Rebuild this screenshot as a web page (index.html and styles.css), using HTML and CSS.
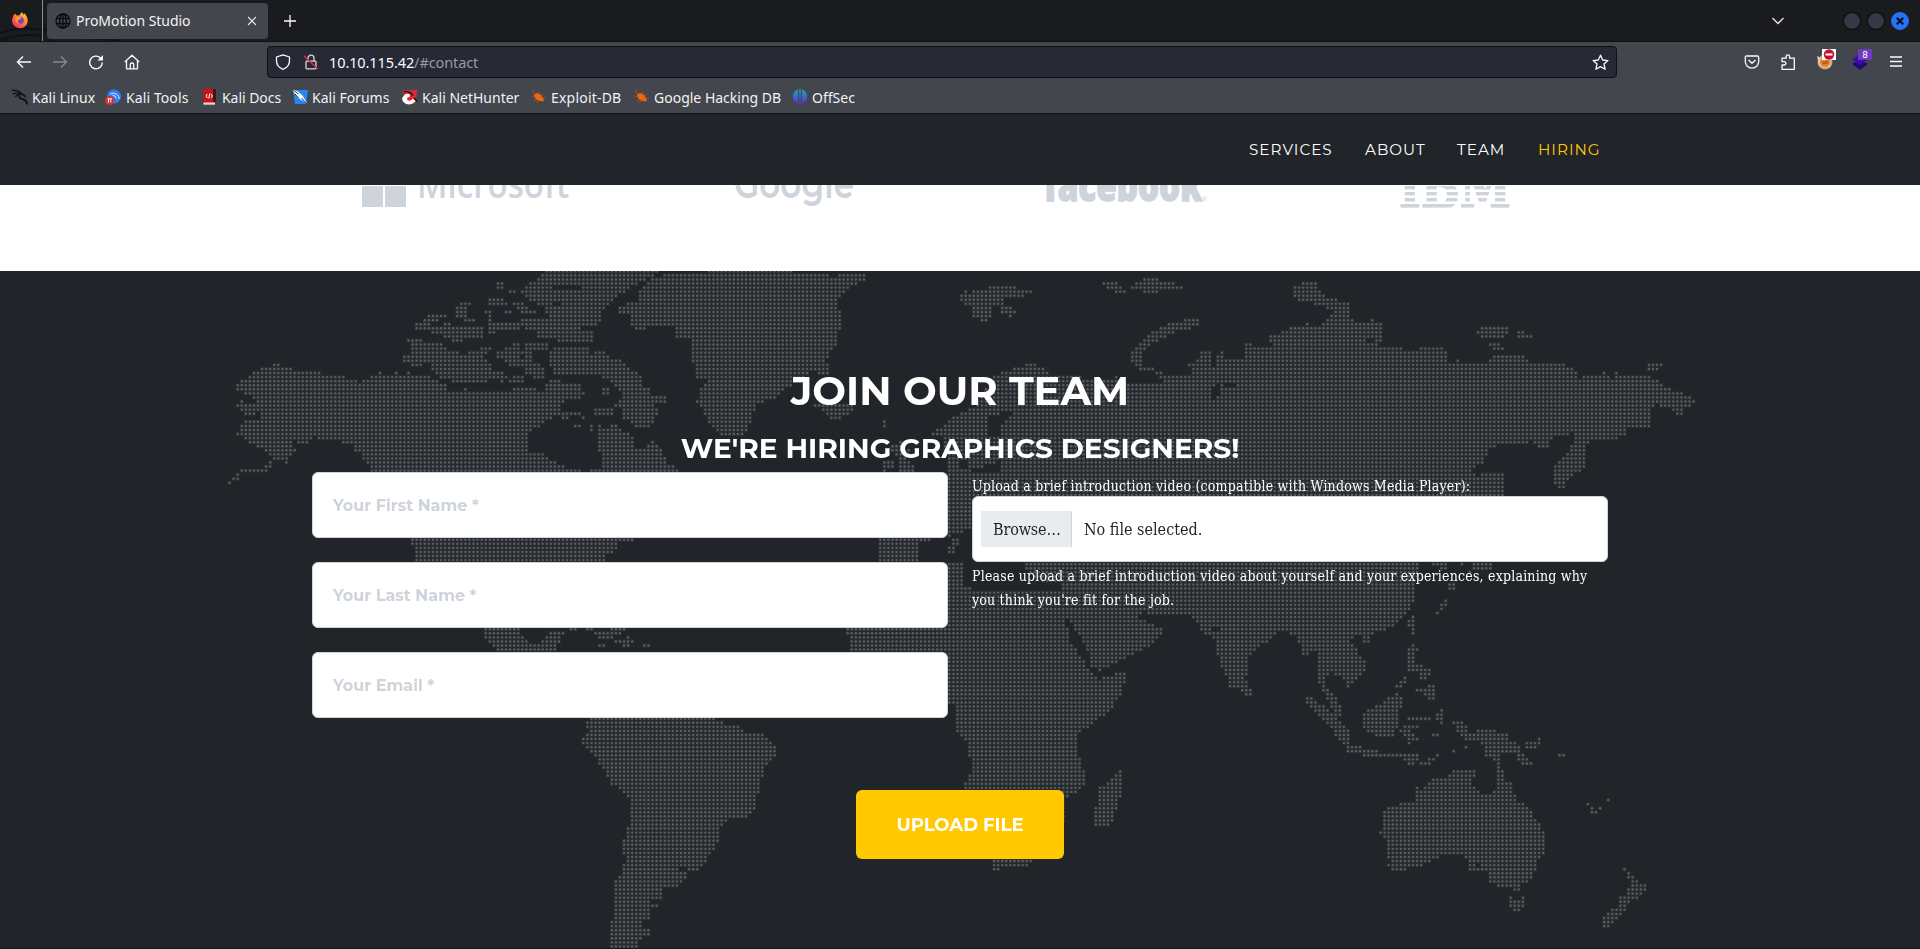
FILE: index.html
```html
<!DOCTYPE html>
<html lang="en">
<head>
<meta charset="utf-8">
<title>ProMotion Studio</title>
<link rel="stylesheet" href="styles.css">
</head>
<body>
<div class="browser">
  <div class="tabbar">
    <svg class="tabbar-art" width="160" height="41" fill="none" stroke="#101114"><path d="M0 33Q22 26 42 30M0 40Q22 33 42 36M42 28Q48 30 54 41M64 38Q90 37 120 41" stroke-width="2"/></svg>
    <div class="pinned">
      <svg width="18" height="18" viewBox="0 0 18 18">
        <defs><linearGradient id="fx" x1="1" y1="0" x2="0.2" y2="1"><stop offset="0" stop-color="#ffe14a"/><stop offset=".45" stop-color="#ff8a1e"/><stop offset="1" stop-color="#f0286c"/></linearGradient></defs>
        <path d="M2.6 4.2 4 2.6l1.3 1.6L8 4.4 11 1l1.4 2.6L14 2.6l2.2 4.2c2 6-2.2 10.400-7.200 10.400S.2 13 1.200 8Z" fill="url(#fx)"/>
        <circle cx="9.300" cy="9.300" r="3.500" fill="#8038d8"/><path d="M4.600 6.500c2-1.500 4 .3 6-.3-.4 2-2.200 2-3.500 3-1 1 0 3 2 2.700-3 1.500-5.500-1.500-4.500-5.400Z" fill="#ff9a28"/>
      </svg>
    </div>
    <div class="tab">
      <svg width="16" height="16" viewBox="0 0 16 16" fill="none" stroke="#0c0c0d" stroke-width="1.300"><circle cx="8" cy="8" r="7"/><ellipse cx="8" cy="8" rx="3.300" ry="7"/><path d="M8 1v14M1.500 5.500h13M1.500 10.500h13"/></svg>
      <span class="tab-title">ProMotion Studio</span>
      <svg class="tab-close" width="10" height="10" viewBox="0 0 10 10" stroke="#e8e8ea" stroke-width="1.100"><path d="M1 1l8 8M9 1L1 9"/></svg>
    </div>
    <svg class="newtab" width="12" height="12" viewBox="0 0 12 12" stroke="#fbfbfe" stroke-width="1.300"><path d="M6 0v12M0 6h12"/></svg>
    <div class="window-controls">
      <svg class="chevron" width="12" height="8" viewBox="0 0 12 8" fill="none" stroke="#e8e8ea" stroke-width="1.300"><path d="M.5 1 6 6.500 11.500 1"/></svg>
      <i class="dot"></i><i class="dot"></i>
      <i class="dot dot-close"><svg width="8" height="8" viewBox="0 0 8 8" stroke="#0b1020" stroke-width="2.200"><path d="M.8.8l6.400 6.400M7.200.8L.8 7.200"/></svg></i>
    </div>
  </div>
  <div class="toolbar">
    <div class="nav-buttons">
      <svg width="16" height="16" viewBox="0 0 16 16" fill="none" stroke="#fbfbfe" stroke-width="1.400"><path d="M15 8H1.500M7 2.500 1.500 8 7 13.500"/></svg>
      <svg width="16" height="16" viewBox="0 0 16 16" fill="none" stroke="#86888c" stroke-width="1.400"><path d="M1 8h13.500M9 2.500 14.500 8 9 13.500"/></svg>
      <svg width="16" height="16" viewBox="0 0 16 16" fill="none" stroke="#fbfbfe" stroke-width="1.400"><path d="M12.500 4A6.300 6.300 0 1 0 14.300 8.500"/><path d="M9.500 6.500H15V1Z" fill="#fbfbfe" stroke="none"/></svg>
      <svg width="16" height="16" viewBox="0 0 16 16" fill="none" stroke="#fbfbfe" stroke-width="1.300" stroke-linejoin="round"><path d="M.8 8 8 1.200 15.200 8M2.500 6.800v8h11v-8M6.300 14.500V10.500q0-1.500 1.700-1.500t1.700 1.500v4"/></svg>
    </div>
    <div class="urlbar">
      <svg width="16" height="16" viewBox="0 0 16 16" fill="none" stroke="#fbfbfe" stroke-width="1.300" stroke-linejoin="round"><path d="M8 .8 14.500 3v3.500C14.500 11 11.500 14 8 15.300 4.500 14 1.500 11 1.500 6.500V3Z"/></svg>
      <svg width="16" height="16" viewBox="0 0 16 16" fill="none"><rect x="3" y="7.200" width="10" height="7.600" rx="1" stroke="#d8d8dc" stroke-width="1.300"/><path d="M5 7V4.200a3 3 0 0 1 6 0V7" stroke="#d8d8dc" stroke-width="1.300"/><path d="M1 2l14 13" stroke="#e22850" stroke-width="1.400"/></svg>
      <span class="url"><b>10.10.115.42</b>/#contact</span>
      <svg class="star" width="17" height="17" viewBox="0 0 17 17" fill="none" stroke="#fbfbfe" stroke-width="1.300" stroke-linejoin="round"><path d="M8.500 1.200 10.700 6l5.200.6-3.900 3.500 1.100 5.200-4.600-2.700-4.600 2.700L5 10.100 1.100 6.600 6.300 6Z"/></svg>
    </div>
    <div class="actions">
      <svg width="16" height="16" viewBox="0 0 16 16" fill="none" stroke="#fbfbfe" stroke-width="1.300" stroke-linejoin="round"><path d="M2.500 2h11q1.200 0 1.200 1.200V7.500a6.700 6.700 0 0 1-13.400 0V3.200Q1.300 2 2.500 2ZM4.500 6 8 9.200 11.500 6"/></svg>
      <svg width="16" height="16" viewBox="0 0 16 16" fill="none" stroke="#fbfbfe" stroke-width="1.300" stroke-linejoin="round"><path d="M2 15.300V11h2.200a1.700 1.700 0 0 0 0-3.400H2V4.200h4.200V2.500a1.700 1.700 0 0 1 3.400 0v1.700h4.700v11.100Z"/></svg>
      <svg class="ext" width="20" height="21" viewBox="0 0 20 21"><circle cx="9" cy="13" r="7.500" fill="#b9a58e"/><path d="M1 7l4 2 4-2 6 3-1 8-6 1-5-3Z" fill="#d9cdbd"/><circle cx="9" cy="13" r="5.200" fill="#f58a1f"/><path d="M5 12l3 1 2-2 3 2-2 3-2-1-2 1Z" fill="#c45f1a"/><rect x="6" y="0" width="14" height="11" fill="#fff"/><circle cx="13" cy="5.500" r="5.200" fill="#c3122f"/><rect x="9.500" y="4.500" width="7" height="2" fill="#fff"/></svg>
      <svg class="ext" width="20" height="21" viewBox="0 0 20 21"><path d="M0 15l8-4 8 4-8 6Z" fill="#200a70"/><path d="M0 10.500 8 5l8 5.500-8 5.500Z" fill="#4608ad"/><rect x="6" y="0" width="14" height="11" rx="1" fill="#6e3cc0"/><text x="13" y="9" text-anchor="middle" class="badge">8</text></svg>
      <svg width="14" height="16" viewBox="0 0 14 16" stroke="#fbfbfe" stroke-width="1.300"><path d="M1 3h12M1 7.500h12M1 12h12"/></svg>
    </div>
  </div>
  <div class="bookmarks">
    <div><svg width="16" height="16" viewBox="0 0 16 16" fill="none" stroke="#111214"><path d="M0 1.500q6-1 10 3.500M1 5q4-2 8-.5M3.500 8q2-3.500 6-3 3 1 4.500 3" stroke-width="1.400"/><path d="M7.500 6q-1 3.500 3.500 4.200 3.800.8 4 5.300" stroke-width="1.900"/></svg><span>Kali Linux</span></div>
    <div><svg width="16" height="16" viewBox="0 0 16 16"><circle cx="9" cy="7.500" r="7" fill="#2f7df2"/><path d="M5 5q4-2 7 .5t2 4.500M7.500 6.500q3-.5 4 3" fill="none" stroke="#dbe8ff"/><circle cx="4.600" cy="11.500" r="4.500" fill="#e02d31"/><path d="M2.500 9.800h4.400M3.500 10v3.500M5.800 10v3.500" stroke="#fff" fill="none"/></svg><span class="narrow">Kali Tools</span></div>
    <div><svg width="16" height="16" viewBox="0 0 16 16"><path d="M1.500 0H11v15H1.500Z" fill="#cf1015"/><path d="M11 0h3v13h-3Z" fill="#3a1720"/><path d="M1.500 13.500H13v2.200H1.500Z" fill="#e9d6d6"/><path d="M5.500 5 4 7l1.500 2M9 5l1.500 2L9 9M7.800 4.500 6.700 9.500" stroke="#fff" fill="none"/></svg><span class="narrow">Kali Docs</span></div>
    <div><svg width="16" height="16" viewBox="0 0 16 16"><path d="M1 1h15L14 15H3Z" fill="#2388f5"/><path d="M0 0 6 2.500 10 6l2 3 3.500 6-5-3.500-4-2L3 5Z" fill="#fff"/><path d="M0 0l6.500 5M3 5l4 4.500M9.500 9l5.500 6" stroke="#16202c" fill="none" stroke-width=".9"/></svg><span>Kali Forums</span></div>
    <div><svg width="16" height="16" viewBox="0 0 16 16"><path d="M1 1h14.500L13 15H3Z" fill="#e0262f"/><path d="M0 9.500q3-6.500 8-4l-.5 2.500q-3.500.5-2 3 2.500 2 5.500-1.500l3 2.500q-5 4.500-9.500 3-4-1.500-4.500-5.500Z" fill="#fff"/><path d="M2 2.500q6-.5 9 4M12 9l3 3.500" stroke="#17171a" fill="none" stroke-width="1.600"/></svg><span>Kali NetHunter</span></div>
    <div><svg width="16" height="16" viewBox="0 0 16 16"><path d="M3 5q4-2 7 1t3 6q-4 1-7-1T3 5Z" fill="#f2650f"/><path d="M1 3l4 3M0 7l5 1M2 12l5-2M5 14l4-3M8 2l1 4M12 5l-2 3M11 9l4 0M1 2l3 0" stroke="#c4561a" fill="none" stroke-width=".6"/></svg><span class="wide">Exploit-DB</span></div>
    <div><svg width="16" height="16" viewBox="0 0 16 16"><path d="M3 5q4-2 7 1t3 6q-4 1-7-1T3 5Z" fill="#f2650f"/><path d="M1 3l4 3M0 7l5 1M2 12l5-2M5 14l4-3M8 2l1 4M12 5l-2 3M11 9l4 0M1 2l3 0" stroke="#c4561a" fill="none" stroke-width=".6"/></svg><span>Google Hacking DB</span></div>
    <div><svg width="16" height="16" viewBox="0 0 16 16"><defs><linearGradient id="os" x1="0" y1="0" x2="0" y2="1"><stop offset="0" stop-color="#18a5b8"/><stop offset="1" stop-color="#5b2bd0"/></linearGradient></defs><path d="M6 .6v13.800A7.200 7.200 0 0 1 6 .6ZM10 .6v13.800A7.200 7.200 0 0 0 10 .6ZM7.200 0h1.600v16H7.200Z" fill="url(#os)"/></svg><span>OffSec</span></div>
  </div>
</div>

<nav class="site-nav">
  <a class="n1">SERVICES</a><a class="n2">ABOUT</a><a class="n3">TEAM</a><a class="n4 active">HIRING</a>
</nav>

<section class="clients">
  <svg width="324" height="26" fill="#ced4da"><path d="M50 1h21v21H50ZM73 1h21v21H73Z"/><text class="logo-ms" x="105" y="13" textLength="152" lengthAdjust="spacingAndGlyphs">Microsoft</text></svg>
  <svg width="324" height="26" fill="#ced4da"><text class="logo-go" x="98" y="12.500" textLength="120" lengthAdjust="spacingAndGlyphs">Google</text></svg>
  <svg width="324" height="26" fill="#ced4da"><text class="logo-fb" x="84" y="16" textLength="158" lengthAdjust="spacingAndGlyphs">facebook</text><text class="logo-r" x="242" y="16">®</text></svg>
  <svg width="324" height="26"><defs><pattern id="bars" width="120" height="6" patternUnits="userSpaceOnUse" y="1"><rect width="120" height="3.400" fill="#ced4da"/></pattern></defs><text class="logo-ibm" x="115" y="22.500" fill="url(#bars)" stroke="url(#bars)" stroke-width="2" textLength="112" lengthAdjust="spacingAndGlyphs">IBM</text></svg>
</section>

<section class="contact" id="contact">
  <canvas class="map" id="map" width="1920" height="677"></canvas>
  <div class="inner">
    <h2><span>JOIN OUR TEAM</span></h2>
    <h3><span>WE'RE HIRING GRAPHICS DESIGNERS!</span></h3>
    <form class="form">
      <div class="col fields">
        <div class="field"><span class="p1">Your First Name *</span></div>
        <div class="field"><span class="p2">Your Last Name *</span></div>
        <div class="field"><span class="p3">Your Email *</span></div>
      </div>
      <div class="col upload">
        <div class="label"><span class="l1">Upload a brief introduction video (compatible with Windows Media Player):</span></div>
        <div class="file"><div class="browse"><span>Browse…</span></div><span class="nofile">No file selected.</span></div>
        <div class="label"><span class="l2">Please upload a brief introduction video about yourself and your experiences, explaining why</span></div>
        <div class="label"><span class="l3">you think you're fit for the job.</span></div>
      </div>
    </form>
    <div class="submit"><span>UPLOAD FILE</span></div>
  </div>
</section>
<script src="map.js"></script>
</body>
</html>
```
FILE: styles.css
```css
* { box-sizing: border-box; }
body { margin: 0; width: 1920px; height: 949px; overflow: hidden; background: #fff; font-family: "Noto Sans", sans-serif; display: flex; flex-direction: column; }
svg { display: block; flex: none; }

.browser { height: 114px; flex: none; background: #43464c; border-bottom: 1px solid #0d0e11; color: #f2f2f4; font-family: "Noto Sans", sans-serif; font-size: 14px; }
.tabbar { position: relative; display: flex; align-items: center; height: 42px; background: #1a1b1f; border-bottom: 1px solid #0f1013; }
.tabbar-art { position: absolute; left: 0; top: 0; }
.pinned { position: relative; width: 43px; height: 41px; padding: 11px 0 0 11px; border-right: 1px solid #8d8e91; }
.tab { position: relative; display: flex; align-items: center; width: 221px; height: 36px; margin-left: 4px; padding: 0 11px 0 8px; border-radius: 4px; background: #43464c; }
.tab-title { margin-left: 5px; letter-spacing: -.04px; }
.tab-close { margin-left: auto; }
.newtab { margin-left: 16px; }
.window-controls { display: flex; align-items: center; margin-left: auto; padding-right: 11px; gap: 6px; }
.chevron { margin-right: 53px; }
.dot { width: 18px; height: 18px; border-radius: 50%; background: #343946; border: 1px solid #07080a; display: flex; align-items: center; justify-content: center; }
.dot-close { background: #2472f5; border-color: #2472f5; }

.toolbar { display: flex; align-items: center; height: 40px; }
.nav-buttons { display: flex; gap: 20px; width: 267px; padding-left: 16px; }
.urlbar { display: flex; align-items: center; width: 1350px; height: 32px; padding: 0 7px; border: 1px solid #0e0f13; border-radius: 4px; background: #272935; gap: 12px; }
.url { color: #9a9ba2; margin-left: -2px; font-size: 14.500px; letter-spacing: -.1px; }
.url b { font-weight: 400; color: #fbfbfe; }
.star { margin-left: auto; }
.actions { display: flex; align-items: center; padding-left: 127px; gap: 20px; }
.ext { margin: -5px 0 0 0; }
.actions svg:nth-child(4) { margin-left: -4px; }
.actions svg:nth-child(5) { margin-left: -3px; }
.badge { font: 9px "DejaVu Sans", sans-serif; fill: #fff; }
.bookmarks { display: grid; grid-template-columns: 93px 97px 90px 110px 129px 103px 158px 100px; padding: 6px 0 0 12px; }
.bookmarks div { display: flex; align-items: center; gap: 4px; height: 18px; white-space: nowrap; }
.narrow { letter-spacing: -.05px; }
.wide { letter-spacing: .2px; }
.bookmarks div:nth-child(2) { gap: 5px; }
.bookmarks div:nth-child(2) .narrow { letter-spacing: .1px; }

.site-nav { position: relative; display: flex; align-items: center; height: 71px; flex: none; padding: 0 0 0 1249px; background: #212529; color: #fff; font: 400 15.200px/24px Montserrat, "Inter", sans-serif; }
.site-nav a { letter-spacing: 1px; white-space: nowrap; }
.n1 { width: 116px; } .n2 { width: 92px; } .n3 { width: 81px; }
.site-nav .active { color: #ffc800; }

.clients { display: grid; grid-template-columns: repeat(4, 324px); height: 86px; flex: none; padding: 0 312px; background: #fff; }
.logo-ms { font: 600 37px "Open Sans", sans-serif; }
.logo-go { font: 600 40px Montserrat, "Lato", sans-serif; }
.logo-fb { font: 800 42px "Open Sans", sans-serif; stroke: #ced4da; stroke-width: 1.500px; }
.logo-r { font: 6px "Open Sans", sans-serif; }
.logo-ibm { font: 700 62px "DejaVu Serif", serif; }

.contact { position: relative; height: 678px; flex: none; background: #212529; border-bottom: 1px solid #15181a; }
.map { position: absolute; left: 0; top: 0; }
.inner { position: relative; width: 1296px; margin: 0 auto; padding-top: 96px; color: #fff; }
h2, h3 { margin: 0; font-family: Montserrat, "Inter", sans-serif; font-weight: 700; text-align: center; white-space: nowrap; }
h2 { font-size: 40px; line-height: 48px; }
h3 { font-size: 28px; line-height: 34px; margin-top: 16px; padding-bottom: 7px; }
h2 span, h3 span, .submit span { display: inline-block; }
.form { display: grid; grid-template-columns: 636px 636px; gap: 24px; }
.fields { display: flex; flex-direction: column; gap: 24px; }
.field, .file { display: flex; align-items: center; height: 66px; border: 1px solid #ced4da; border-radius: 6px; background: #fff; }
.field { padding: 1px 0 0 20px; color: #ced4da; font: 700 16px/24px Montserrat, "Inter", sans-serif; }
.label { height: 24px; padding-top: 2px; font: 14px/24px "Roboto Slab", "DejaVu Serif Condensed", "DejaVu Serif", serif; font-stretch: condensed; letter-spacing: .2px; white-space: nowrap; }
.file { padding-left: 8px; color: #212529; font: 16px/24px "Roboto Slab", "DejaVu Serif Condensed", "DejaVu Serif", serif; font-stretch: condensed; white-space: nowrap; }
.file span { padding-top: 1px; }
.browse { display: flex; align-items: center; width: 91px; height: 36px; padding-left: 12px; background: #e9ecef; border-right: 1px solid #ced4da; letter-spacing: -.15px; }
.nofile { margin-left: 12px; }
.submit { display: flex; align-items: center; justify-content: center; width: 208px; height: 69px; margin: 72px auto 0; border-radius: 6px; background: #ffc800; font: 700 18px/24px Montserrat, "Inter", sans-serif; white-space: nowrap; }
```
FILE: map.js
```js
// Dotted world map. Each sheet holds outlines in its own units:
// page x = ox + x / sx, section y = oy + y / 3.
const sheets = [
  { ox: 220, oy: -1, sx: 2.45, land: [
    // North America
    "40,345 50,330 70,320 80,305 100,295 130,292 132,281 148,281 152,292 178,296 180,304 245,304 250,314 305,320 330,332 345,338 350,330 375,318 390,306 400,318 430,306 450,315 462,306 480,315 505,318 535,332 560,345 560,362 590,362 595,353 610,353 612,362 640,366 700,366 715,355 775,355 780,366 800,360 795,342 820,325 850,340 885,345 893,370 880,390 850,390 835,405 835,430 800,455 770,480 757,495 755,540 785,545 800,565 825,575 850,593 885,598 885,605 905,605 905,598 940,590 935,560 928,540 930,465 945,470 970,465 1000,490 1015,505 1020,530 1045,530 1060,512 1075,530 1085,550 1095,575 1110,590 1125,605 1060,760 1015,803 1010,812 975,815 970,840 950,855 945,880 480,880 468,800 400,625 370,605 365,590 350,575 345,555 330,540 320,525 290,515 240,505 235,498 215,522 190,520 185,512 170,525 190,537 185,552 168,560 165,582 155,565 135,570 118,602 50,612 45,628 20,642 15,635 40,612 55,600 110,590 130,565 110,545 90,530 70,515 50,500 40,490 50,465 60,452 100,445 95,430 60,435 50,420 30,410 45,395 55,390 70,400 90,400 85,385 60,375 40,360",
    "450,275 450,255 470,245 470,225 458,213 460,206 495,206 497,218 540,220 560,240 590,248 605,260 612,242 640,242 640,232 665,232 665,245 650,255 640,262 655,272 665,285 665,295 695,308 710,320 695,338 665,328 640,338 545,332 530,310 520,295 520,280 470,290",
    "678,262 678,250 700,232 730,218 740,225 735,240 745,245 740,260 745,287 710,287 700,272",
    "748,220 805,220 800,248 768,248 768,275 785,287 800,312 798,332 770,325 745,305 748,245",
    "705,322 740,318 745,335 705,338",
    "808,240 815,230 900,232 910,250 930,242 955,255 960,268 985,268 1000,290 1035,315 1035,345 1055,355 1060,372 1095,378 1092,398 1060,400 1075,420 1065,460 1045,472 1015,468 985,440 990,425 965,405 985,380 975,350 945,330 930,312 815,312 808,270",
    "935,353 955,353 955,375 935,375", "915,413 962,413 965,432 920,437", "836,430 870,422 900,447 870,437 840,447", "866,462 884,462 884,472 866,472", "906,462 914,462 914,482 906,482",
    "478,165 500,145 510,132 557,132 550,145 532,150 560,160 580,174 600,165 645,175 645,202 560,204 520,190 515,175 478,180",
    "568,206 595,206 595,216 568,216", "577,125 588,95 617,95 617,108 602,123 602,140 577,140", "600,150 612,145 627,148 627,162 603,162",
    "648,125 665,118 657,85 685,85 707,95 707,112 668,112 665,155 735,155 737,175 680,182 665,205 655,180 656,140 648,135", "692,120 716,120 716,132 692,132",
    "676,35 697,35 697,57 676,57", "706,58 727,58 727,70 706,70", "716,98 742,90 745,110 777,122 775,138 740,133 722,117",
    "738,65 760,40 800,3 1078,3 1045,32 1020,42 990,67 960,90 950,107 930,125 935,150 925,165 870,167 865,175 878,172 915,182 912,215 828,215 820,203 776,203 778,180 740,173 735,147 780,147 803,143 797,110 765,95 745,80",
    // Greenland
    "978,127 978,110 1000,95 1025,92 1030,60 1050,32 1065,22 1085,22 1085,6 1196,6 1196,-2 1403,-2 1403,6 1492,6 1494,22 1513,22 1513,6 1584,6 1584,32 1560,42 1531,67 1512,90 1522,150 1514,210 1500,242 1480,275 1492,285 1490,312 1470,312 1450,305 1420,340 1390,350 1365,380 1320,400 1305,440 1285,495 1260,500 1225,497 1195,450 1185,420 1165,395 1180,355 1197,325 1165,322 1170,290 1150,275 1150,210 1115,205 1110,172 1045,172 1040,180 1025,180 1005,165 1000,135",
    "1450,400 1560,400 1548,430 1508,448 1480,430"
  ], water: ["816,45 888,45 888,58 816,58", "830,110 800,92 840,92", "560,345 620,340 700,342 700,352 625,350 580,358", "668,112 705,132 700,146 668,146", "520,158 545,155 545,166 520,166"] },
  { ox: 220, oy: 329, sx: 2.119, land: [
    "785,345 1040,345 1060,366 1095,373 1110,392 1145,400 1172,425 1182,445 1178,470 1155,500 1145,550 1142,580 1128,642 1100,657 1075,662 1060,690 1057,725 1035,775 1010,810 990,815 990,835 970,862 940,866 937,898 912,905 930,915 912,932 912,958 895,962 892,985 914,988 912,1008 893,1012 885,1050 826,1050 826,962 845,930 835,930 835,845 855,820 853,790 863,770 853,765 853,735 862,690 870,650 870,600 850,567 825,550 820,520 800,495 800,475 785,455 766,432 766,412 782,400 776,385 776,365",
    "558,84 637,84 637,105 655,128 680,130 690,105 698,95 730,95 720,130 712,157 595,157 575,138 560,115",
    "740,82 757,82 757,92 740,92", "777,82 790,82 790,92 777,92", "826,82 860,82 850,103 828,100", "792,95 825,95 835,115 803,117", "835,120 862,120 862,107 870,112 878,130 838,130", "802,131 818,131 818,141 802,141", "854,131 869,131 869,141 854,141", "897,131 912,131 912,141 897,141"
  ], water: ["975,800 992,800 992,812 975,812"] },
  { ox: 940, oy: -1, sx: 2.01, land: [
    // Eurasia
    "-20,490 3,470 20,450 40,430 70,405 95,350 105,318 130,305 155,292 180,280 188,280 210,298 230,315 280,320 345,330 355,318 360,345 375,345 400,340 440,345 450,335 440,315 430,302 400,300 383,275 383,245 400,222 410,205 430,182 465,158 500,146 523,146 523,168 470,188 440,207 420,232 407,250 407,285 433,298 450,315 500,322 510,305 500,285 520,265 523,244 548,244 555,265 565,244 575,262 612,265 612,220 628,220 630,230 670,230 660,205 665,193 690,185 712,170 735,168 740,158 748,166 770,165 777,146 785,135 775,115 755,103 720,94 710,77 714,48 738,30 742,28 760,45 765,65 785,85 824,96 820,115 822,140 832,155 865,158 870,145 885,158 890,215 882,228 930,232 935,242 965,235 1005,232 1022,245 1022,272 1035,280 1040,266 1048,282 1103,278 1110,256 1175,256 1188,275 1225,282 1250,280 1275,300 1285,325 1290,318 1325,318 1340,302 1350,328 1358,305 1372,318 1420,316 1440,330 1463,355 1500,375 1520,392 1510,408 1495,410 1495,432 1485,434 1465,415 1440,405 1430,420 1430,472 1385,472 1380,490 1355,512 1310,508 1300,520 1300,580 1288,605 1265,625 1247,665 1233,640 1235,590 1260,545 1280,510 1270,490 1232,500 1222,532 1205,532 1195,515 1130,522 1100,545 1095,578 1068,600 1075,615 1135,610 1137,690 1060,700 1000,780 962,880 958,940 955,990 940,1030 920,1062 890,1087 830,1100 828,1115 842,1150 857,1170 855,1200 835,1238 820,1256 815,1235 800,1220 780,1200 777,1250 795,1280 807,1310 806,1338 795,1335 778,1290 763,1250 758,1150 745,1150 742,1160 728,1158 728,1130 712,1095 700,1088 672,1090 665,1112 640,1132 620,1160 620,1195 612,1232 600,1255 582,1258 573,1210 563,1180 555,1140 548,1100 530,1095 520,1060 495,1033 425,1035 410,1020 400,1045 415,1052 445,1072 445,1090 425,1130 400,1145 350,1182 320,1202 305,1195 300,1150 285,1110 265,1060 242,1020 240,940 195,930 175,900 170,870 60,790 60,780 16,800 0,620 16,610 16,560 3,540 3,500",
    // Africa
    "-190,1065 -190,1088 -180,1100 -182,1150 -60,1280 15,1303 33,1303 32,1380 48,1405 57,1440 57,1460 65,1465 66,1500 48,1540 48,1600 85,1740 98,1760 108,1800 122,1800 125,1790 170,1790 190,1770 230,1700 250,1655 250,1600 258,1575 275,1568 293,1545 293,1500 285,1490 276,1425 280,1390 310,1362 345,1312 368,1260 376,1208 350,1208 345,1218 320,1226 300,1195 265,1120 255,1060 240,1010 240,965 200,962 150,960 70,962 48,940 45,878 16,878 -100,940",
    "-124,806 -15,806 -20,815 -42,820 -45,873 -124,873", "25,800 35,800 40,820 30,845 16,850 16,835",
    "-120,570 -95,570 -90,595 -120,605", "-100,530 -75,510 -62,540 -70,560 -50,590 -55,606 -80,606 -85,570", "-118,445 -108,445 -108,475 -118,475",
    "-250,405 -173,405 -185,430 -215,448 -232,432",
    // Arctic islands
    "38,78 48,60 60,68 80,60 98,58 98,48 156,48 156,58 187,60 185,68 170,80 130,84 130,105 107,110 107,138 97,153 80,153 63,138 63,110 48,105 38,88", "122,108 145,108 153,122 145,142 138,138 138,130 122,132",
    "318,36 358,36 358,46 376,60 374,70 352,70 350,56 333,54", "383,50 392,38 408,36 408,22 440,22 442,36 465,36 490,48 488,56 440,58 442,70 408,70 405,58 385,56",
    "1080,190 1088,170 1142,170 1142,190 1135,204 1088,204", "1153,180 1175,182 1180,193 1193,194 1193,203 1163,203", "1103,218 1127,218 1135,232 1135,240 1113,240", "1422,278 1455,280 1440,300 1422,300",
    // East Asia and Oceania
    "988,878 1020,878 1020,905 1008,905", "1045,878 1052,878 1052,890 1045,890", "1075,876 1112,876 1105,900 1080,905 1060,910", "1022,940 1038,940 1035,960 1022,958", "1012,988 1021,988 1020,1008 1005,1033 998,1030",
    "947,1032 957,1032 957,1093 948,1090 940,1068 940,1055", "850,1088 866,1088 862,1118 850,1118",
    "948,1120 956,1122 964,1138 958,1150 956,1185 985,1190 990,1215 970,1230 955,1205 940,1200 940,1140", "956,1262 968,1250 996,1245 997,1270 988,1297 980,1288 972,1268", "930,1220 940,1222 932,1245 922,1262 916,1250",
    "735,1282 752,1282 770,1308 800,1345 805,1358 822,1375 827,1422 812,1424 795,1395 775,1362 752,1325 735,1300", "775,1275 795,1280 808,1310 806,1338 795,1338",
    "818,1425 850,1430 855,1438 882,1440 880,1450 962,1450 965,1460 948,1485 940,1485 932,1465 875,1460 818,1450", "965,1478 1003,1450 1003,1460 980,1485 968,1486", "605,1228 618,1230 618,1252 630,1262 628,1280 612,1278 605,1262",
    "848,1330 870,1315 900,1285 915,1268 932,1282 930,1305 922,1320 925,1360 912,1400 878,1402 858,1385 848,1365", "930,1365 964,1363 962,1375 945,1383 964,1400 958,1412 945,1425 932,1425 942,1405 930,1400 925,1382", "940,1340 980,1340 988,1328 988,1342 980,1350 940,1350", "998,1335 1008,1315 1014,1330 1012,1362 1000,1358", "990,1389 1004,1389 1004,1400 990,1400",
    "1030,1352 1052,1352 1062,1372 1062,1385 1078,1390 1080,1376 1112,1376 1118,1388 1138,1390 1142,1403 1168,1425 1168,1448 1192,1478 1192,1487 1178,1487 1160,1470 1155,1452 1130,1455 1128,1472 1112,1470 1090,1460 1098,1440 1088,1415 1055,1408 1035,1380", "1178,1430 1178,1415 1200,1412 1200,1400 1210,1400 1208,1425 1185,1438", "1243,1450 1258,1450 1258,1461 1243,1461", "1053,1426 1061,1426 1061,1436 1053,1436", "1029,1438 1037,1438 1037,1448 1029,1448",
    "889,1620 915,1608 935,1596 955,1595 957,1550 970,1555 985,1530 1000,1522 1022,1520 1032,1498 1078,1498 1078,1515 1070,1530 1072,1550 1090,1568 1110,1570 1120,1560 1120,1460 1127,1460 1127,1497 1136,1500 1136,1532 1152,1536 1155,1570 1162,1592 1185,1612 1190,1635 1200,1645 1210,1670 1218,1690 1216,1755 1202,1775 1190,1822 1180,1842 1168,1845 1166,1864 1152,1864 1150,1850 1122,1852 1105,1835 1098,1808 1065,1802 1060,1770 1045,1755 1005,1755 1000,1765 975,1780 970,1790 930,1800 910,1803 898,1790 908,1775 896,1752 896,1710 881,1692 889,1670",
    "1144,1876 1152,1886 1168,1886 1170,1876 1177,1878 1174,1905 1166,1925 1155,1925 1144,1908",
    "1373,1792 1382,1795 1395,1820 1405,1842 1422,1842 1420,1852 1410,1880 1400,1888 1385,1900 1380,1918 1360,1945 1345,1976 1333,1976 1325,1960 1340,1935 1365,1900 1365,1876 1382,1886 1382,1858 1392,1855 1385,1825",
    "1300,1598 1307,1598 1312,1610 1322,1618 1328,1608 1333,1616 1322,1630 1308,1628", "1340,1585 1349,1585 1349,1596 1340,1596",
    "358,1498 367,1502 367,1568 357,1590 350,1650 342,1672 311,1672 311,1612 320,1600 318,1550 345,1530"
  ], water: ["100,440 135,425 148,415 145,435 125,460 122,500 100,498 97,465", "38,575 55,570 56,596 38,600", "60,598 90,592 100,580 122,575 122,605 100,612 60,612", "549,258 557,268 558,345 568,350 562,375 552,392 541,388 552,350", "570,335 595,340 595,350 570,350", "858,205 872,205 872,220 858,220", "775,115 798,128 795,140 778,132", "548,1075 560,1075 560,1085 548,1085", "1078,1785 1088,1785 1088,1795 1078,1795"] }
];
const ctx = document.getElementById("map").getContext("2d");
const toPaths = (s, list) => list.map(o => {
  const q = new Path2D();
  o.split(" ").forEach((pt, i) => {
    const [x, y] = pt.split(",").map(Number);
    q[i ? "lineTo" : "moveTo"](s.ox + x / s.sx, s.oy + y / 3);
  });
  q.closePath();
  return q;
});
const land = sheets.flatMap(s => toPaths(s, s.land));
const water = sheets.flatMap(s => toPaths(s, s.water));
const pitch = 4.067;
for (let r = -1; r < 170; r++) {
  for (let c = 0; c < 372; c++) {
    const x = 221.4 + c * pitch, y = 4.4 + r * pitch;
    if (!land.some(p => ctx.isPointInPath(p, x, y)) || water.some(p => ctx.isPointInPath(p, x, y))) continue;
    ctx.fillStyle = "rgba(255,255,255,.04)";
    ctx.fillRect(x - 2, y - 2, 4, 4);
    ctx.fillStyle = "#5a5e60";
    ctx.beginPath();
    ctx.arc(x, y, 1.2, 0, 7);
    ctx.fill();
  }
}
```
